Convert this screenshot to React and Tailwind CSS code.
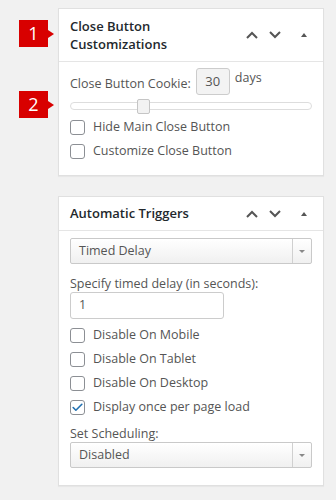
import { Check } from 'lucide-react';

// 메타박스 헤더 아이콘
const HeaderIcons = () => (
  <div className="flex items-center gap-[9px] text-[#555]">
    <svg width="14" height="10" viewBox="0 0 14 10">
      <path d="M2 8 L7 3 L12 8" fill="none" stroke="currentColor" strokeWidth="2" />
    </svg>
    <svg width="14" height="10" viewBox="0 0 14 10">
      <path d="M2 2 L7 7 L12 2" fill="none" stroke="currentColor" strokeWidth="2" />
    </svg>
    <svg width="14" height="10" viewBox="0 0 14 10" className="ml-[6px]">
      <path d="M4 7 L7 3 L10 7 Z" fill="currentColor" />
    </svg>
  </div>
);

const Badge = ({ n, className }) => (
  <div className={`absolute left-[19px] flex items-center ${className}`}>
    <div className="w-[29px] h-[27px] bg-[#d80000] text-white text-[18px] flex items-center justify-center">
      {n}
    </div>
    <div className="w-0 h-0 border-y-[4px] border-y-transparent border-l-[6px] border-l-[#d80000]" />
  </div>
);

const CheckBox = ({ label, checked }) => (
  <label className="flex items-center gap-[8px] h-[24px]">
    <span className="w-[15px] h-[15px] rounded-[3px] border border-[#8c8f94] bg-white flex items-center justify-center">
      {checked && <Check size={13} strokeWidth={3} className="text-[#2271b1]" />}
    </span>
    <span>{label}</span>
  </label>
);

const Select = ({ value }) => (
  <div className="flex h-[26px] border border-[#c9c9c9] rounded-[2px] bg-gradient-to-b from-white to-[#f0f0f0]">
    <div className="flex-1 px-[8px] flex items-center">{value}</div>
    <div className="w-[19px] border-l border-[#d0d0d0] flex items-center justify-center">
      <svg width="8" height="5" viewBox="0 0 8 5"><path d="M1 1 L4 4 L7 1 Z" fill="#888" /></svg>
    </div>
  </div>
);

export default function App() {
  return (
    <div
      className="relative w-[336px] h-[500px] bg-[#f1f1f1] text-[#555] text-[12.5px] pt-[8px]"
      style={{ fontFamily: '"Open Sans", "Noto Sans", sans-serif' }}
    >
      <Badge n="1" className="top-[20px]" />
      <Badge n="2" className="top-[91px]" />

      {/* Close Button Customizations */}
      <div className="ml-[58px] w-[266px] bg-white border border-[#e0e0e0] shadow-[0_1px_1px_rgba(0,0,0,0.04)]">
        <div className="flex items-center justify-between pl-[11px] pr-[12px] h-[53px] border-b border-[#e5e5e5]">
          <div className="text-[13px] font-semibold text-[#23282d] leading-[18px]">
            Close Button<br />Customizations
          </div>
          <HeaderIcons />
        </div>
        <div className="px-[11px] pt-[6px] pb-[12px]">
          <div className="flex items-start gap-[5px] h-[29px]">
            <span className="mt-[7px]">Close Button Cookie:</span>
            <span className="w-[34px] h-[27px] border border-[#ccc] rounded-[3px] bg-[#f3f3f3] flex items-center justify-center text-[13px]">30</span>
            <span className="mt-[1px]">days</span>
          </div>
          <div className="relative h-[14px] mt-[2px] flex items-center">
            <div className="w-full h-[8px] rounded-[4px] border border-[#ddd] bg-white" />
            <div className="absolute left-[67px] w-[13px] h-[15px] rounded-[2px] border border-[#c5c5c5] bg-[#f2f2f2]" />
          </div>
          <div className="mt-[2px]">
            <CheckBox label="Hide Main Close Button" />
            <CheckBox label="Customize Close Button" />
          </div>
        </div>
      </div>

      {/* Automatic Triggers */}
      <div className="ml-[58px] mt-[20px] w-[266px] bg-white border border-[#e0e0e0] shadow-[0_1px_1px_rgba(0,0,0,0.04)]">
        <div className="flex items-center justify-between pl-[11px] pr-[12px] h-[34px] border-b border-[#e5e5e5]">
          <div className="text-[13px] font-semibold text-[#23282d]">Automatic Triggers</div>
          <HeaderIcons />
        </div>
        <div className="px-[11px] pt-[7px] pb-[17px]">
          <Select value="Timed Delay" />
          <div className="mt-[12px] leading-[16px]">Specify timed delay (in seconds):</div>
          <div className="w-[154px] h-[27px] border border-[#ccc] rounded-[3px] px-[8px] flex items-center">1</div>
          <div className="mt-[4px]">
            <CheckBox label="Disable On Mobile" />
            <CheckBox label="Disable On Tablet" />
            <CheckBox label="Disable On Desktop" />
            <CheckBox label="Display once per page load" checked />
          </div>
          <div className="mt-[7px] leading-[16px]">Set Scheduling:</div>
          <Select value="Disabled" />
        </div>
      </div>
    </div>
  );
}
